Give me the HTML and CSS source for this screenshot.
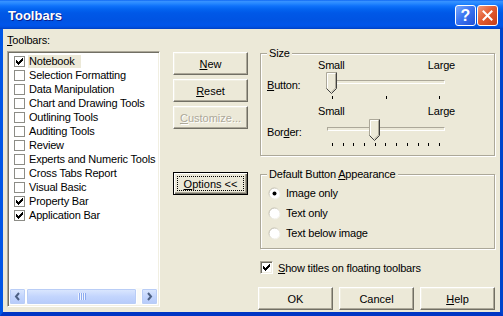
FILE: index.html
```html
<!DOCTYPE html>
<html lang="en">
<head>
    <meta charset="UTF-8">
    <meta name="viewport" content="width=device-width, initial-scale=1.0">
    <title>Toolbars</title>
    <link rel="stylesheet" href="styles.css">
</head>
<body>

<svg class="defs" width="0" height="0">
    <defs>
        <symbol id="chk" viewBox="0 0 7 7">
            <path d="M6 0h1v1h-1z M5 1h2v1h-2z M0 2h1v1h-1z M4 2h3v1h-3z M0 3h2v1h-2z M3 3h3v1h-3z M0 4h5v1h-5z M1 5h3v1h-3z M2 6h1v1h-1z" fill="#000"/>
        </symbol>
        <linearGradient id="ring" x1="0" y1="0" x2="1" y2="1">
            <stop offset="0" stop-color="#aca899"/>
            <stop offset="0.55" stop-color="#e2dfd2"/>
            <stop offset="1" stop-color="#ffffff"/>
        </linearGradient>
    </defs>
</svg>

<div class="window">
    <div class="titlebar">
        <span class="title">Toolbars</span>
        <div class="caption-buttons">
            <span class="cap-btn help">?</span>
            <span class="cap-btn close">
                <svg width="11" height="11" viewBox="0 0 11 11">
                    <path d="M1.5 1.5L9.5 9.5M9.5 1.5L1.5 9.5" stroke="#fff" stroke-width="2" stroke-linecap="square"/>
                </svg>
            </span>
        </div>
    </div>

    <div class="client">
        <!-- toolbar list -->
        <div class="col-list">
            <div class="label"><u>T</u>oolbars:</div>
            <div class="listbox">
                <div class="items">
                    <div class="item"><span class="lcheck"><svg width="7" height="7"><use href="#chk"/></svg></span><span class="text sel">Notebook</span></div>
                    <div class="item"><span class="lcheck"></span><span class="text">Selection Formatting</span></div>
                    <div class="item"><span class="lcheck"></span><span class="text">Data Manipulation</span></div>
                    <div class="item"><span class="lcheck"></span><span class="text">Chart and Drawing Tools</span></div>
                    <div class="item"><span class="lcheck"></span><span class="text">Outlining Tools</span></div>
                    <div class="item"><span class="lcheck"></span><span class="text">Auditing Tools</span></div>
                    <div class="item"><span class="lcheck"></span><span class="text">Review</span></div>
                    <div class="item"><span class="lcheck"></span><span class="text">Experts and Numeric Tools</span></div>
                    <div class="item"><span class="lcheck"></span><span class="text">Cross Tabs Report</span></div>
                    <div class="item"><span class="lcheck"></span><span class="text">Visual Basic</span></div>
                    <div class="item"><span class="lcheck"><svg width="7" height="7"><use href="#chk"/></svg></span><span class="text">Property Bar</span></div>
                    <div class="item"><span class="lcheck"><svg width="7" height="7"><use href="#chk"/></svg></span><span class="text">Application Bar</span></div>
                </div>
                <div class="hscroll">
                    <span class="sb-btn">
                        <svg width="7" height="9" viewBox="0 0 7 9"><path d="M5 1L2 4.5L5 8" stroke="#4d6185" stroke-width="2" fill="none"/></svg>
                    </span>
                    <span class="sb-thumb"><span class="grip"></span></span>
                    <span class="sb-track"></span>
                    <span class="sb-btn">
                        <svg width="7" height="9" viewBox="0 0 7 9"><path d="M2 1L5 4.5L2 8" stroke="#4d6185" stroke-width="2" fill="none"/></svg>
                    </span>
                </div>
            </div>
        </div>

        <!-- list buttons -->
        <div class="col-buttons">
            <button class="btn"><u>N</u>ew</button>
            <button class="btn"><u>R</u>eset</button>
            <button class="btn disabled"><u>C</u>ustomize...</button>
            <button class="btn default"><span class="focus"><u>O</u>ptions &lt;&lt;</span></button>
        </div>

        <!-- options -->
        <div class="col-options">
            <div class="group size-group">
                <span class="group-title">Size</span>
                <div class="scale-labels"><span>Small</span><span>Large</span></div>
                <div class="slider-row">
                    <span class="slider-label"><u>B</u>utton:</span>
                    <div class="slider">
                        <div class="track"></div>
                        <div class="ticks">
                            <i></i><i></i><i></i>
                        </div>
                        <svg class="thumb" style="left: 0px" width="11" height="23" viewBox="0 0 11 23">
                            <path d="M0.5 0.5H10.5V16.5L5.5 21.5L0.5 16.5Z" fill="#ece9d8"/>
                            <path d="M0.5 16.5V0.5H10.5" stroke="#aca899" fill="none"/>
                            <path d="M1.5 16V1.5H9.5" stroke="#fff" fill="none"/>
                            <path d="M10.5 0.5V16.5L5.5 21.5L0.5 16.5" stroke="#404040" fill="none"/>
                            <path d="M9.5 1.5V16L5.5 20" stroke="#aca899" fill="none"/>
                        </svg>
                    </div>
                </div>
                <div class="scale-labels second"><span>Small</span><span>Large</span></div>
                <div class="slider-row second">
                    <span class="slider-label">Bor<u>d</u>er:</span>
                    <div class="slider">
                        <div class="track"></div>
                        <div class="ticks">
                            <i></i><i></i><i></i><i></i><i></i><i></i><i></i><i></i><i></i><i></i><i></i>
                        </div>
                        <svg class="thumb" style="left: 43px" width="11" height="23" viewBox="0 0 11 23">
                            <path d="M0.5 0.5H10.5V16.5L5.5 21.5L0.5 16.5Z" fill="#ece9d8"/>
                            <path d="M0.5 16.5V0.5H10.5" stroke="#aca899" fill="none"/>
                            <path d="M1.5 16V1.5H9.5" stroke="#fff" fill="none"/>
                            <path d="M10.5 0.5V16.5L5.5 21.5L0.5 16.5" stroke="#404040" fill="none"/>
                            <path d="M9.5 1.5V16L5.5 20" stroke="#aca899" fill="none"/>
                        </svg>
                    </div>
                </div>
            </div>

            <div class="group appearance-group">
                <span class="group-title">Default Button <u>A</u>ppearance</span>
                <div class="radio-row">
                    <svg width="13" height="13" viewBox="0 0 13 13">
                        <circle cx="6.5" cy="6.5" r="5.5" fill="#fff" stroke="url(#ring)"/>
                        <circle cx="6.5" cy="6.5" r="2" fill="#000"/>
                    </svg>
                    <span>Image only</span>
                </div>
                <div class="radio-row">
                    <svg width="13" height="13" viewBox="0 0 13 13">
                        <circle cx="6.5" cy="6.5" r="5.5" fill="#fff" stroke="url(#ring)"/>
                    </svg>
                    <span>Text only</span>
                </div>
                <div class="radio-row">
                    <svg width="13" height="13" viewBox="0 0 13 13">
                        <circle cx="6.5" cy="6.5" r="5.5" fill="#fff" stroke="url(#ring)"/>
                    </svg>
                    <span>Text below image</span>
                </div>
            </div>

            <div class="check-row">
                <span class="check3d"><svg width="7" height="7"><use href="#chk"/></svg></span>
                <span><u>S</u>how titles on floating toolbars</span>
            </div>

            <div class="dialog-buttons">
                <button class="btn">OK</button>
                <button class="btn">Cancel</button>
                <button class="btn"><u>H</u>elp</button>
            </div>
        </div>
    </div>
</div>

</body>
</html>
```

FILE: styles.css
```css
body {
    margin: 0;
    background-color: #0054e3;
    font-family: "Liberation Sans", Arial, sans-serif;
    font-size: 11px;
    letter-spacing: -0.2px;
    color: #000;
}
.defs {
    display: block;
    width: 0;
    height: 0;
}
.window {
    width: 503px;
    height: 316px;
    display: flex;
    flex-direction: column;
}

/* title bar */
.titlebar {
    height: 29px;
    flex: none;
    box-sizing: border-box;
    display: flex;
    justify-content: space-between;
    padding: 0 5px 0 8px;
    background: linear-gradient(to bottom, #0058ee 0, #3a93ff 1px, #2a8bff 3px, #0f72fa 6px, #0364f0 9px, #0058e7 13px, #0054e3 20px, #0055ea 25px, #0050e0 27px, #0040c4 29px);
}
.title {
    color: #fff;
    font-weight: bold;
    font-size: 13px;
    letter-spacing: 0;
    line-height: 31px;
    text-shadow: 1px 1px #0a1e8c;
}
.caption-buttons {
    display: flex;
    gap: 1px;
    padding-top: 5px;
}
.cap-btn {
    width: 21px;
    height: 21px;
    box-sizing: border-box;
    border: 1px solid #fff;
    border-radius: 3px;
    display: flex;
    align-items: center;
    justify-content: center;
}
.help {
    background: linear-gradient(135deg, #7aa8fc 0%, #3c76f2 45%, #1f4fd6 100%);
    color: #fff;
    font-weight: bold;
    font-size: 16px;
    letter-spacing: 0;
}
.close {
    background: linear-gradient(135deg, #f29a7a 0%, #e35d32 45%, #c63e16 100%);
}

/* dialog body */
.client {
    flex: 1;
    display: flex;
    background-color: #ece9d8;
    border-style: solid;
    border-width: 0 3px 4px 3px;
    border-color: #0054e3 #0044cc #0035c4 #0056e6;
    padding: 5px 5px 0 4px;
}
.col-list {
    width: 153px;
    display: flex;
    flex-direction: column;
}
.label {
    line-height: 13px;
}
.listbox {
    margin-top: 4px;
    height: 256px;
    box-sizing: border-box;
    background-color: #fff;
    border: 1px solid;
    border-color: #aca899 #fff #fff #aca899;
    box-shadow: inset 1px 1px #716f64, inset -1px -1px #f1efe2;
    padding: 1px;
    display: flex;
    flex-direction: column;
}
.items {
    flex: 1;
    padding: 1px 0 0 5px;
    overflow: hidden;
}
.item {
    display: flex;
    align-items: center;
    height: 14px;
}
.lcheck {
    flex: none;
    width: 11px;
    height: 11px;
    box-sizing: border-box;
    border: 1px solid #8c8c86;
    background-color: #fff;
    display: flex;
    align-items: center;
    justify-content: center;
}
.item .text {
    flex: none;
    margin-left: 3px;
    padding: 0 6px 0 1px;
    line-height: 13px;
    white-space: nowrap;
}
.item .text.sel {
    background-color: #ece9d8;
}
.hscroll {
    display: flex;
    height: 17px;
    background-color: #fbfbf8;
}
.sb-btn,
.sb-thumb {
    box-sizing: border-box;
    border: 1px solid #fff;
    border-radius: 2px;
    background: linear-gradient(to bottom, #dde8fe, #c3d5fd 50%, #b6cbfa);
    box-shadow: inset 0 0 0 1px #b9cdf6;
    display: flex;
    align-items: center;
    justify-content: center;
}
.sb-btn {
    width: 17px;
}
.sb-thumb {
    width: 111px;
}
.sb-track {
    flex: 1;
}
.grip {
    width: 8px;
    height: 7px;
    background: repeating-linear-gradient(to right, #eef4fe 0 1px, #8caaf0 1px 2px);
}

/* buttons */
.col-buttons {
    margin-left: 13px;
    width: 75px;
    padding-top: 18px;
    display: flex;
    flex-direction: column;
    gap: 4px;
}
.btn {
    width: 75px;
    height: 23px;
    padding: 0;
    font: inherit;
    color: #000;
    background-color: #ece9d8;
    border: 1px solid;
    border-color: #fff #716f64 #716f64 #fff;
    box-shadow: inset -1px -1px #aca899, inset 1px 1px #f1efe2;
}
.btn.disabled {
    color: #aca899;
    text-shadow: 1px 1px #fff;
}
.btn.default {
    margin-top: 39px;
    border: 1px solid #000;
    box-shadow: inset 1px 1px #fff, inset -1px -1px #716f64, inset -2px -2px #aca899;
    padding: 3px;
}
.btn .focus {
    display: flex;
    align-items: center;
    justify-content: center;
    height: 100%;
    box-sizing: border-box;
    border: 1px dotted #000;
}

/* options */
.col-options {
    margin-left: 12px;
    width: 235px;
    padding-top: 19px;
    display: flex;
    flex-direction: column;
}
.group {
    position: relative;
    border: 1px solid #aca899;
    box-shadow: inset 1px 1px #fff, 1px 1px #fff;
}
.group-title {
    position: absolute;
    top: -7px;
    left: 6px;
    padding: 0 2px;
    line-height: 13px;
    background-color: #ece9d8;
}
.size-group {
    padding: 6px 0 7px 0;
}
.scale-labels {
    display: flex;
    justify-content: space-between;
    margin-left: 57px;
    width: 137px;
    line-height: 11px;
    height: 11px;
}
.scale-labels.second {
    margin-top: 5px;
}
.slider-row {
    display: flex;
    margin-top: 1px;
    padding-left: 6px;
}
.slider-row.second {
    margin-top: 2px;
}
.slider-label {
    width: 59px;
    margin-top: 7px;
    line-height: 13px;
}
.slider {
    position: relative;
    width: 120px;
    height: 29px;
}
.track {
    margin: 8px 1px 0;
    height: 4px;
    box-sizing: border-box;
    border: 1px solid;
    border-color: #aca899 #fff #fff #aca899;
}
.ticks {
    display: flex;
    justify-content: space-between;
    margin: 12px 0 0 6px;
    width: 108px;
}
.ticks i {
    width: 1px;
    height: 3px;
    background-color: #000;
}
.thumb {
    position: absolute;
    top: 0;
}
.appearance-group {
    margin-top: 18px;
    padding: 8px 0 5px 7px;
}
.radio-row {
    display: flex;
    align-items: center;
    height: 20px;
}
.radio-row span {
    margin-left: 5px;
}
.check-row {
    display: flex;
    align-items: center;
    margin-top: 12px;
    height: 13px;
}
.check3d {
    width: 13px;
    height: 13px;
    box-sizing: border-box;
    border: 1px solid;
    border-color: #aca899 #fff #fff #aca899;
    box-shadow: inset 1px 1px #716f64, inset -1px -1px #f1efe2;
    background-color: #fff;
    display: flex;
    align-items: center;
    justify-content: center;
}
.check-row span + span {
    margin-left: 5px;
}
.dialog-buttons {
    display: flex;
    gap: 6px;
    margin: 13px 0 0 -2px;
}
```
